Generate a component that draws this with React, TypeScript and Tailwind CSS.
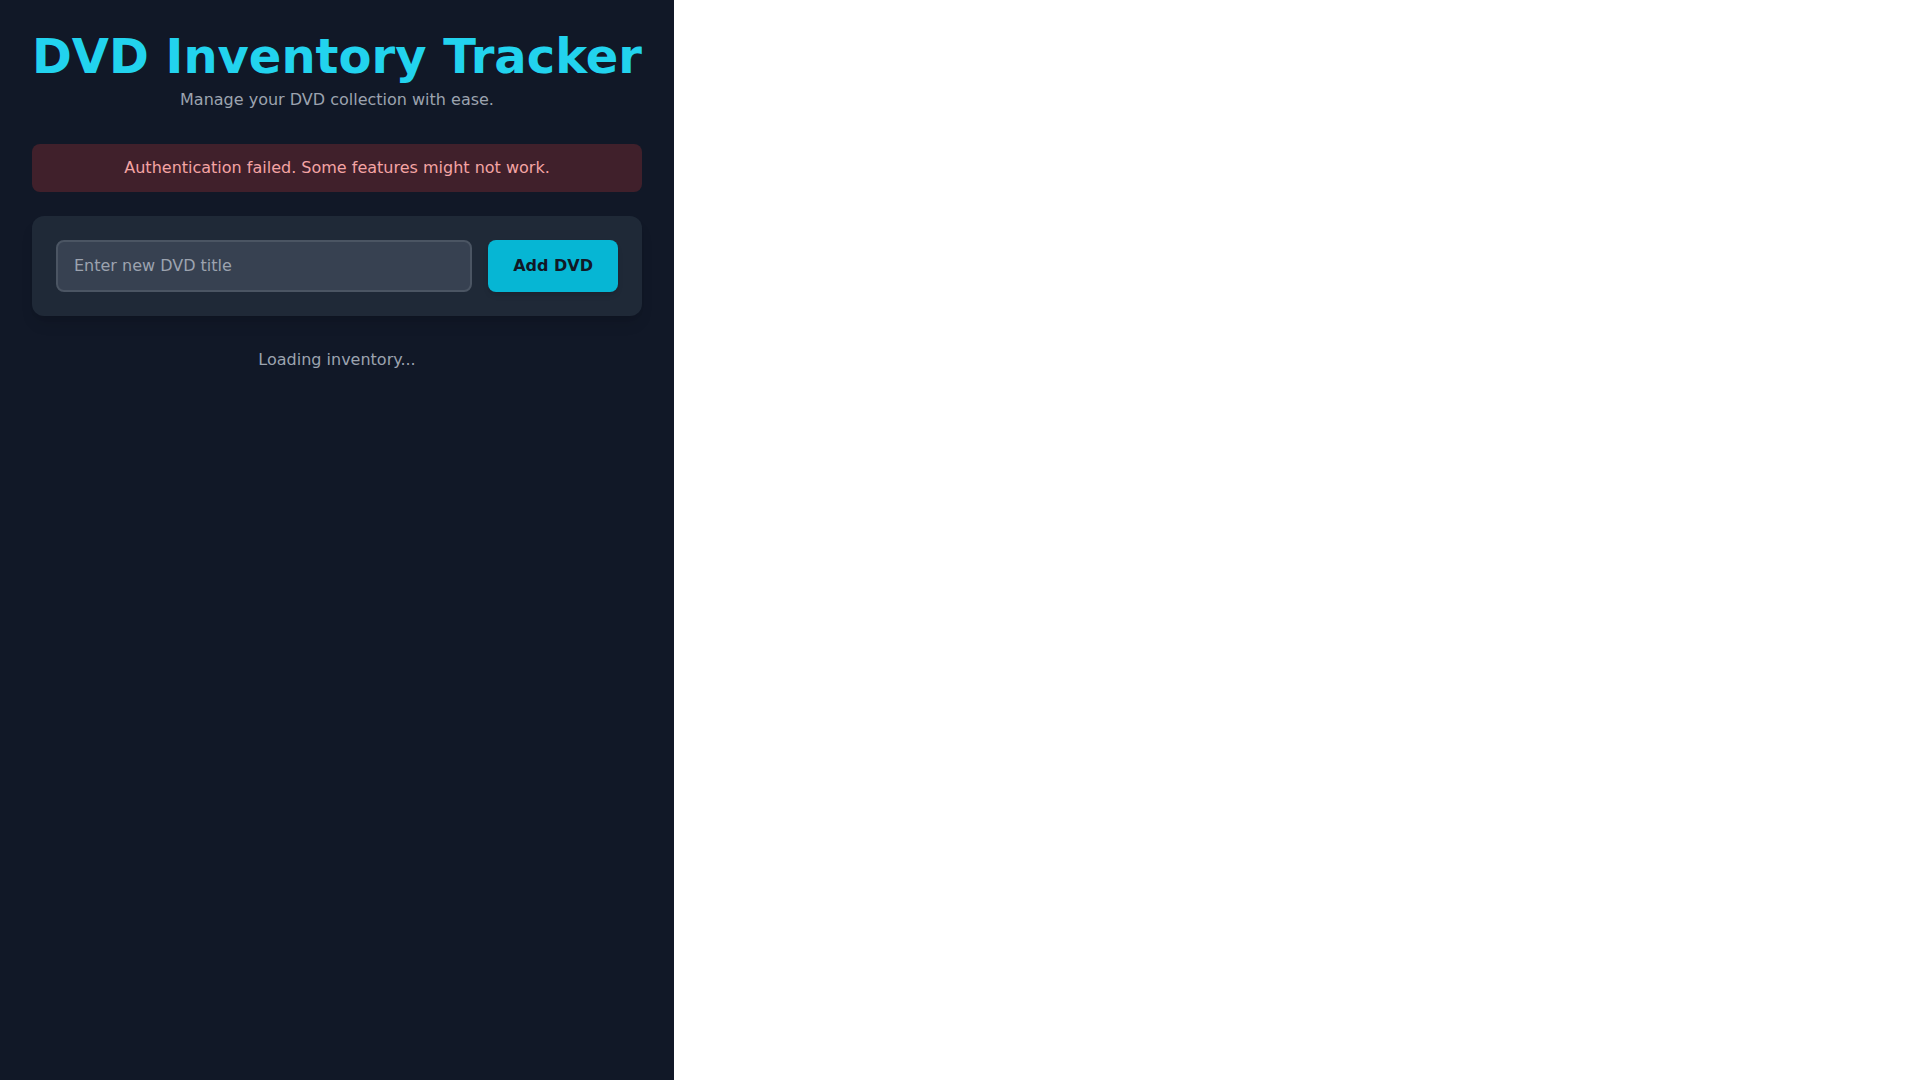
import React from "react";

export default function App() {
  return (
    <div className="flex min-h-screen bg-white font-['DejaVu_Sans',sans-serif]">
      <div className="min-h-screen bg-[#111827] p-8">
        <h1 className="whitespace-nowrap text-center text-5xl font-bold leading-none text-[#22d3ee]">
          DVD Inventory Tracker
        </h1>
        <p className="mt-2 text-center text-base text-[#9ca3af]">
          Manage your DVD collection with ease.
        </p>
        <div className="mt-8 rounded-lg bg-[#40202b] px-4 py-3 text-center text-base text-[#f4a4a4]">
          Authentication failed. Some features might not work.
        </div>
        <div className="mt-6 flex gap-4 rounded-xl bg-[#1f2937] p-6 shadow-lg">
          <input
            type="text"
            placeholder="Enter new DVD title"
            className="min-w-0 flex-1 rounded-lg border-2 border-[#4b5563] bg-[#374151] px-4 py-3 text-base text-white placeholder:text-[#9ca3af] outline-none"
          />
          <button className="rounded-lg bg-[#06b6d4] px-[25px] py-3.5 text-base font-bold text-[#111827] shadow-md">
            Add DVD
          </button>
        </div>
        <p className="mt-8 text-center text-base text-[#9ca3af]">Loading inventory...</p>
      </div>
    </div>
  );
}
